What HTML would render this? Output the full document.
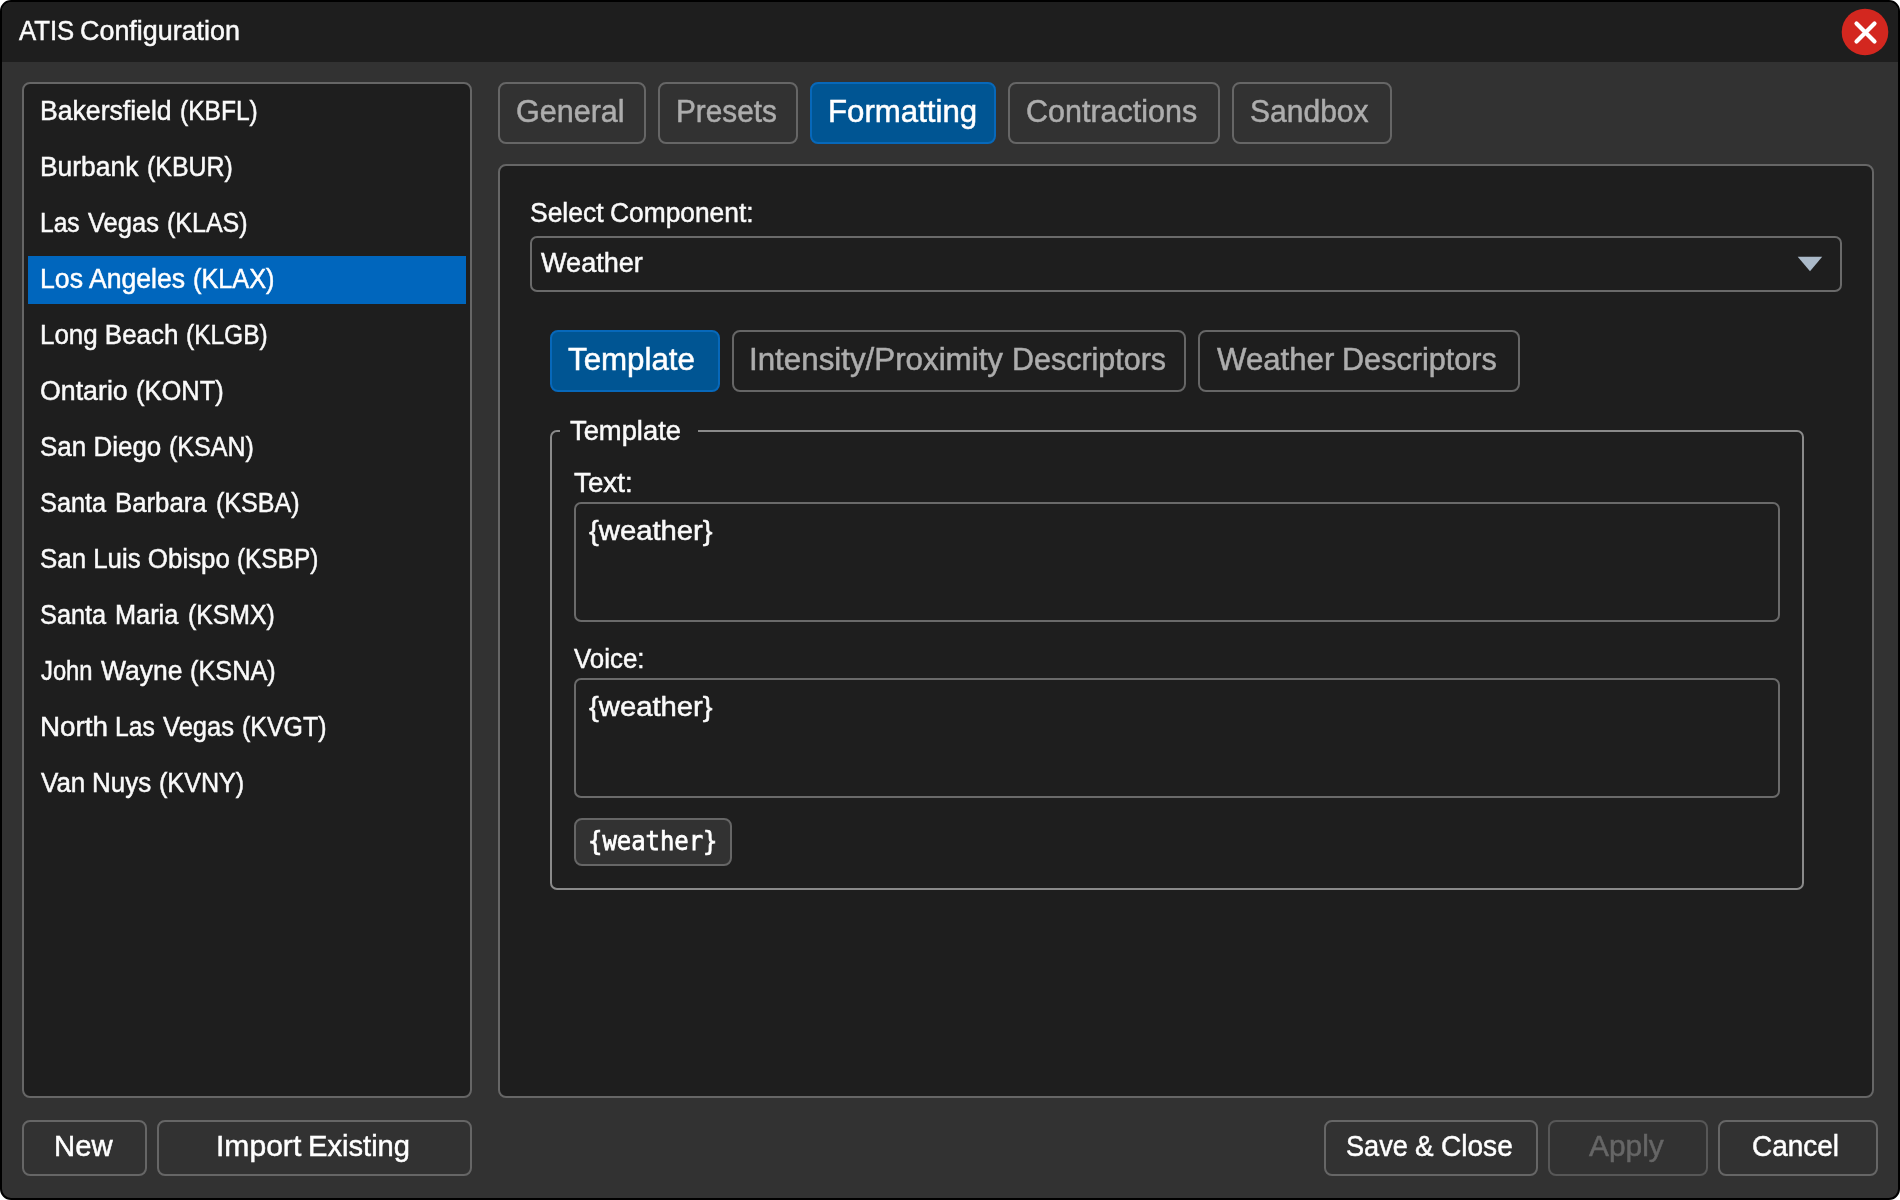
<!DOCTYPE html>
<html lang="en"><head><meta charset="utf-8"><title>ATIS Configuration</title>
<style>
html,body{margin:0;padding:0;background:#ffffff;}
body{width:1900px;height:1200px;position:relative;overflow:hidden;font-family:"Liberation Sans",sans-serif;}
.win{will-change:transform;position:absolute;left:0;top:0;width:1900px;height:1200px;box-sizing:border-box;border:2px solid #000;border-radius:11px;background:#323232;overflow:hidden;}
.stage{position:absolute;left:-2px;top:-2px;width:1900px;height:1200px;}
.abs{position:absolute;box-sizing:border-box;}
.titlebar{left:0;top:0;width:1900px;height:62px;background:#1e1e1e;}
.box{border:2px solid #666666;border-radius:8px;}
.dark{background:#1e1e1e;}
.btn{background:#323232;}
.disabled{border-color:#575757;}
.active{background:#005593;border-color:#0768ba;}
.field{border-radius:7px;border-color:#6a6a6a;}
.group{border-color:#8a8a8a;border-radius:7px;}
.sel{background:#0066bd;}
.t{position:absolute;white-space:pre;margin:0;padding:0;transform-origin:0 0;font-weight:400;font-family:"Liberation Sans",sans-serif;-webkit-text-stroke:0.5px currentColor;}
.mono{font-family:"DejaVu Sans Mono","Liberation Mono",monospace;font-size:26px;line-height:30px;-webkit-text-stroke:0.75px currentColor;}
.s27{font-size:27px;line-height:30px;}
.s30{font-size:30px;line-height:33px;}
.s31{font-size:31px;line-height:35px;}
.w{color:#fafafa;}.ww{color:#ffffff;}.g{color:#adadad;}.d{color:#666666;}
</style></head>
<body>
<div class="win">
<div class="stage">
<div class="abs titlebar"></div>
<div class="title"><span class="t s27 w" style="left:18.56px;top:16.00px;transform:scaleX(0.9521)">ATIS</span> <span class="t s27 w" style="left:79.71px;top:16.00px;transform:scaleX(0.9961)">Configuration</span></div>
<svg class="abs" style="left:1841px;top:8px" width="48" height="48" viewBox="0 0 48 48"><circle cx="24" cy="24" r="23.3" fill="#d3271f"/><path d="M15.5 15.5 L33.5 33.5 M33.5 15.5 L15.5 33.5" stroke="#ffffff" stroke-width="4.2" stroke-linecap="round" fill="none"/></svg>
<div class="sidebar">
<div class="abs box dark" style="left:22px;top:82px;width:450px;height:1016px;"></div>
<div class="abs sel" style="left:28px;top:256px;width:438px;height:48px;"></div>
<div class="row"><span class="t s27 w" style="left:39.86px;top:96.00px;transform:scaleX(0.9855)">Bakersfield</span> <span class="t s27 w" style="left:179.73px;top:96.00px;transform:scaleX(0.9098)">(KBFL)</span></div>
<div class="row"><span class="t s27 w" style="left:39.51px;top:152.00px;transform:scaleX(0.9782)">Burbank</span> <span class="t s27 w" style="left:146.83px;top:152.00px;transform:scaleX(0.9214)">(KBUR)</span></div>
<div class="row"><span class="t s27 w" style="left:39.95px;top:208.00px;transform:scaleX(0.9105)">Las</span> <span class="t s27 w" style="left:87.70px;top:208.00px;transform:scaleX(0.9441)">Vegas</span> <span class="t s27 w" style="left:167.24px;top:208.00px;transform:scaleX(0.9264)">(KLAS)</span></div>
<div class="row"><span class="t s27 ww" style="left:39.98px;top:264.00px;transform:scaleX(0.9867)">Los Angeles</span> <span class="t s27 ww" style="left:192.92px;top:264.00px;transform:scaleX(0.9365)">(KLAX)</span></div>
<div class="row"><span class="t s27 w" style="left:39.76px;top:320.00px;transform:scaleX(0.9597)">Long Beach</span> <span class="t s27 w" style="left:185.77px;top:320.00px;transform:scaleX(0.9068)">(KLGB)</span></div>
<div class="row"><span class="t s27 w" style="left:40.21px;top:376.00px;transform:scaleX(0.9905)">Ontario</span> <span class="t s27 w" style="left:136.03px;top:376.00px;transform:scaleX(0.9428)">(KONT)</span></div>
<div class="row"><span class="t s27 w" style="left:39.50px;top:432.00px;transform:scaleX(0.9619)">San Diego</span> <span class="t s27 w" style="left:168.65px;top:432.00px;transform:scaleX(0.9271)">(KSAN)</span></div>
<div class="row"><span class="t s27 w" style="left:39.56px;top:488.00px;transform:scaleX(0.9380)">Santa</span> <span class="t s27 w" style="left:114.96px;top:488.00px;transform:scaleX(0.9540)">Barbara</span> <span class="t s27 w" style="left:215.56px;top:488.00px;transform:scaleX(0.9295)">(KSBA)</span></div>
<div class="row"><span class="t s27 w" style="left:39.64px;top:544.00px;transform:scaleX(0.9582)">San Luis Obispo</span> <span class="t s27 w" style="left:236.95px;top:544.00px;transform:scaleX(0.9027)">(KSBP)</span></div>
<div class="row"><span class="t s27 w" style="left:39.56px;top:600.00px;transform:scaleX(0.9380)">Santa</span> <span class="t s27 w" style="left:115.09px;top:600.00px;transform:scaleX(0.9377)">Maria</span> <span class="t s27 w" style="left:188.24px;top:600.00px;transform:scaleX(0.9188)">(KSMX)</span></div>
<div class="row"><span class="t s27 w" style="left:40.60px;top:656.00px;transform:scaleX(0.8804)">John</span> <span class="t s27 w" style="left:101.49px;top:656.00px;transform:scaleX(0.9812)">Wayne</span> <span class="t s27 w" style="left:190.23px;top:656.00px;transform:scaleX(0.9371)">(KSNA)</span></div>
<div class="row"><span class="t s27 w" style="left:39.55px;top:712.00px;transform:scaleX(1.0306)">North</span> <span class="t s27 w" style="left:115.48px;top:712.00px;transform:scaleX(0.9126)">Las</span> <span class="t s27 w" style="left:163.32px;top:712.00px;transform:scaleX(0.9469)">Vegas</span> <span class="t s27 w" style="left:241.91px;top:712.00px;transform:scaleX(0.9229)">(KVGT)</span></div>
<div class="row"><span class="t s27 w" style="left:40.60px;top:768.00px;transform:scaleX(0.9618)">Van</span> <span class="t s27 w" style="left:91.91px;top:768.00px;transform:scaleX(0.9614)">Nuys</span> <span class="t s27 w" style="left:158.64px;top:768.00px;transform:scaleX(0.9309)">(KVNY)</span></div>
</div>
<div class="tabs">
<div class="abs box btn" style="left:498px;top:82px;width:148px;height:62px;"></div>
<div class="abs box btn" style="left:658px;top:82px;width:140px;height:62px;"></div>
<div class="abs box active" style="left:810px;top:82px;width:186px;height:62px;"></div>
<div class="abs box btn" style="left:1008px;top:82px;width:212px;height:62px;"></div>
<div class="abs box btn" style="left:1232px;top:82px;width:160px;height:62px;"></div>
<span class="t s31 g" style="left:516.11px;top:94.40px;transform:scaleX(0.9851)">General</span> <span class="t s31 g" style="left:675.58px;top:94.40px;transform:scaleX(0.9600)">Presets</span> <span class="t s31 ww" style="left:827.67px;top:94.40px;transform:scaleX(1.0070)">Formatting</span> <span class="t s31 g" style="left:1025.89px;top:94.40px;transform:scaleX(0.9836)">Contractions</span> <span class="t s31 g" style="left:1249.68px;top:94.40px;transform:scaleX(0.9686)">Sandbox</span>
</div>
<div class="panel">
<div class="abs box dark" style="left:498px;top:164px;width:1376px;height:934px;"></div>
<div class="label"><span class="t s27 w" style="left:529.72px;top:198.00px;transform:scaleX(0.9793)">Select</span> <span class="t s27 w" style="left:609.67px;top:198.00px;transform:scaleX(0.9758)">Component:</span></div>
<div class="abs box dark field" style="left:530px;top:236px;width:1312px;height:56px;"></div>
<span class="t s27 w" style="left:540.60px;top:248.00px;transform:scaleX(1.0033)">Weather</span>
<svg class="abs" style="left:1796px;top:255px" width="28" height="18" viewBox="0 0 28 18"><path d="M1.7 1.8 L26.2 1.8 L14 16.2 Z" fill="#abbac9"/></svg>
<div class="subtabs">
<div class="abs box active" style="left:550px;top:330px;width:170px;height:62px;"></div>
<div class="abs box dark" style="left:732px;top:330px;width:454px;height:62px;"></div>
<div class="abs box dark" style="left:1198px;top:330px;width:322px;height:62px;"></div>
<span class="t s31 ww" style="left:568.20px;top:342.40px;transform:scaleX(1.0093)">Template</span>
<span class="t s31 g" style="left:749.46px;top:342.40px;transform:scaleX(1.0099)">Intensity/Proximity</span> <span class="t s31 g" style="left:1011.63px;top:342.40px;transform:scaleX(0.9828)">Descriptors</span>
<span class="t s31 g" style="left:1217.10px;top:342.40px;transform:scaleX(1.0062)">Weather</span> <span class="t s31 g" style="left:1341.90px;top:342.40px;transform:scaleX(0.9877)">Descriptors</span>
</div>
<div class="groupbox">
<div class="abs box group" style="left:550px;top:430px;width:1254px;height:460px;"></div>
<div class="abs dark" style="left:560px;top:428px;width:138px;height:6px;"></div>
<span class="t s27 w" style="left:569.70px;top:416.00px;transform:scaleX(1.0125)">Template</span>
<span class="t s27 w" style="left:573.65px;top:468.00px;transform:scaleX(1.0288)">Text:</span>
<div class="abs box dark field" style="left:574px;top:502px;width:1206px;height:120px;"></div>
<span class="t s27 w" style="left:589.09px;top:516.00px;transform:scaleX(1.0835)">{weather}</span>
<span class="t s27 w" style="left:574.00px;top:644.00px;transform:scaleX(0.9586)">Voice:</span>
<div class="abs box dark field" style="left:574px;top:678px;width:1206px;height:120px;"></div>
<span class="t s27 w" style="left:589.09px;top:692.00px;transform:scaleX(1.0835)">{weather}</span>
<div class="abs box btn" style="left:574px;top:818px;width:158px;height:48px;"></div>
<span class="t mono ww" style="left:588.08px;top:826.30px;transform:scaleX(0.9186)">{weather}</span>
</div>
</div>
<div class="buttons">
<div class="abs box btn" style="left:22px;top:1120px;width:125px;height:56px;"></div>
<span class="t s30 ww" style="left:53.85px;top:1129.00px;transform:scaleX(0.9769)">New</span>
<div class="abs box btn" style="left:157px;top:1120px;width:315px;height:56px;"></div>
<span class="t s30 ww" style="left:216.18px;top:1129.00px;transform:scaleX(1.0027)">Import</span> <span class="t s30 ww" style="left:308.11px;top:1129.00px;transform:scaleX(0.9713)">Existing</span>
<div class="abs box btn" style="left:1324px;top:1120px;width:214px;height:56px;"></div>
<span class="t s30 ww" style="left:1345.61px;top:1129.00px;transform:scaleX(0.9050)">Save</span> <span class="t s30 ww" style="left:1414.79px;top:1129.00px;transform:scaleX(0.9271)">&amp;</span> <span class="t s30 ww" style="left:1440.94px;top:1129.00px;transform:scaleX(0.9356)">Close</span>
<div class="abs box btn disabled" style="left:1548px;top:1120px;width:160px;height:56px;"></div>
<span class="t s30 d" style="left:1588.83px;top:1129.00px;transform:scaleX(0.9971)">Apply</span>
<div class="abs box btn" style="left:1718px;top:1120px;width:160px;height:56px;"></div>
<span class="t s30 ww" style="left:1751.82px;top:1129.00px;transform:scaleX(0.9322)">Cancel</span>
</div>
</div>
</div>
</body></html>
